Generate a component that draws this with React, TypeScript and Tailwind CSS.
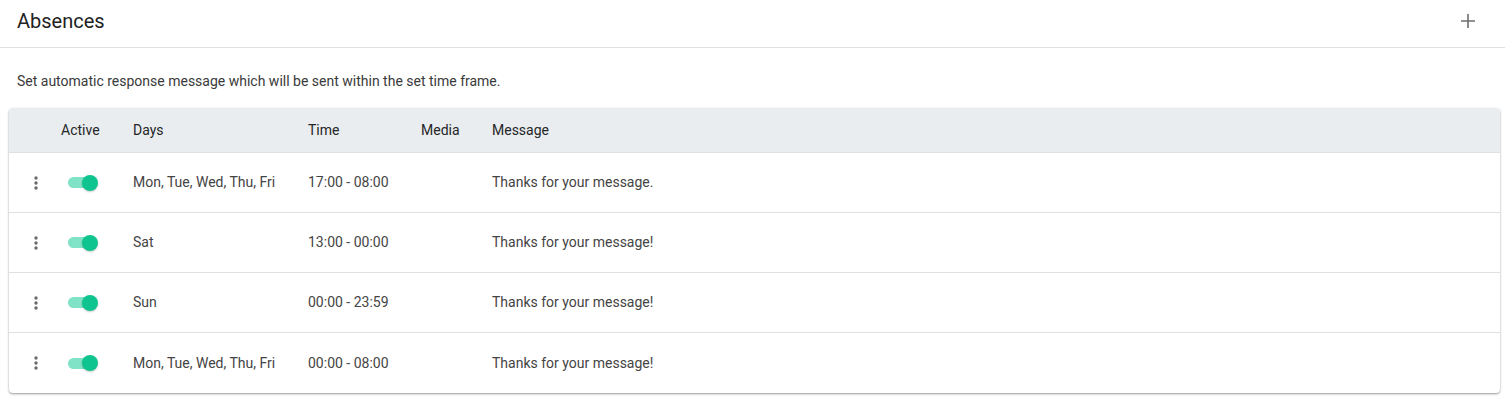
import React from "react";

const rows = [
  { days: "Mon, Tue, Wed, Thu, Fri", time: "17:00 - 08:00", msg: "Thanks for your message." },
  { days: "Sat", time: "13:00 - 00:00", msg: "Thanks for your message!" },
  { days: "Sun", time: "00:00 - 23:59", msg: "Thanks for your message!" },
  { days: "Mon, Tue, Wed, Thu, Fri", time: "00:00 - 08:00", msg: "Thanks for your message!" },
];

function Dots() {
  return (
    <svg width="4" height="14" viewBox="0 0 4 14" className="text-[#6b6b6b]">
      <circle cx="2" cy="2" r="1.7" fill="currentColor" />
      <circle cx="2" cy="7" r="1.7" fill="currentColor" />
      <circle cx="2" cy="12" r="1.7" fill="currentColor" />
    </svg>
  );
}

function Toggle() {
  return (
    <div className="relative w-[30px] h-[16px] flex items-center">
      <div className="w-[24px] h-[11px] rounded-full bg-[#80e2c6]" />
      <div className="absolute right-0 top-0 w-[16px] h-[16px] rounded-full bg-[#10c48f] shadow-[0_1px_2px_rgba(0,0,0,0.2)]" />
    </div>
  );
}

export default function App() {
  return (
    <div className="w-[1505px] h-[414px] bg-white font-['Roboto',sans-serif] text-[#333]">
      <div className="h-[48px] flex items-center justify-between pl-[17px] pr-[30px] pb-[5px] border-b border-[#e0e0e0]">
        <h1 className="text-[20px] text-[#222] leading-none">Absences</h1>
        <svg width="14" height="14" viewBox="0 0 14 14">
          <path d="M7 0v14M0 7h14" stroke="#6e6e6e" strokeWidth="1.6" />
        </svg>
      </div>
      <p className="pl-[17px] pt-[23px] pb-[17px] text-[14px] leading-[20px] text-[#3a3a3a]">
        Set automatic response message which will be sent within the set time frame.
      </p>
      <div className="mx-[9px] w-[1491px] rounded-[4px] shadow-[0_1px_2px_rgba(0,0,0,0.3),0_1px_3px_rgba(0,0,0,0.12)] overflow-hidden">
        <div className="h-[45px] bg-[#e9edf0] flex items-center text-[14px] text-[#262626] border-b border-[#dde1e4]">
          <div className="w-[52px]" />
          <div className="w-[72px]">Active</div>
          <div className="w-[175px]">Days</div>
          <div className="w-[113px]">Time</div>
          <div className="w-[71px]">Media</div>
          <div>Message</div>
        </div>
        {rows.map((r, i) => (
          <div
            key={i}
            className={`h-[60px] flex items-center text-[14px] text-[#444] ${i < rows.length - 1 ? "border-b border-[#e0e0e0]" : ""}`}
          >
            <div className="w-[52px] flex justify-center pl-[1px]">
              <Dots />
            </div>
            <div className="w-[72px] flex pl-[7px]">
              <Toggle />
            </div>
            <div className="w-[175px]">{r.days}</div>
            <div className="w-[113px]">{r.time}</div>
            <div className="w-[71px]" />
            <div>{r.msg}</div>
          </div>
        ))}
      </div>
    </div>
  );
}
